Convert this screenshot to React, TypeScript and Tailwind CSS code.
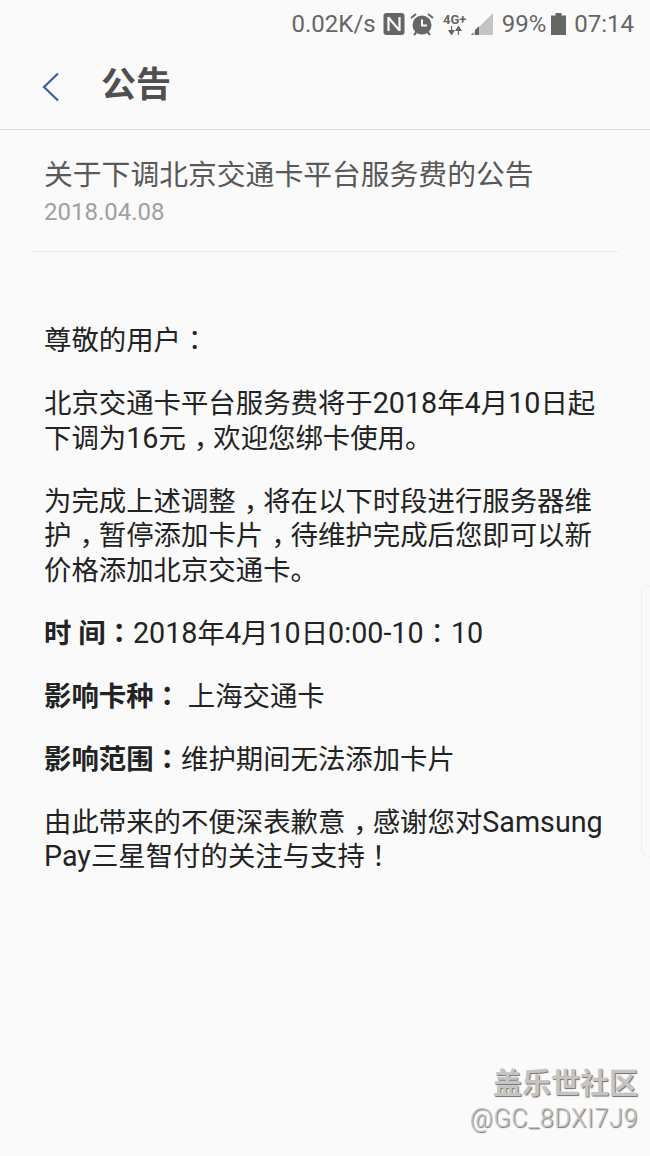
import React from 'react';

const font = '[font-family:Roboto,"Noto_Sans_CJK_SC",sans-serif]';

// centred full-width colon and exclamation mark, the way the phone's font draws them
function P({ children }: { children: React.ReactNode }) {
  return <span className='leading-none [font-family:"Noto_Sans_CJK_TC",sans-serif]'>{children}</span>;
}

// the comma sits low but in the middle of its cell
function Comma() {
  return <span className="inline-block leading-none translate-x-[8px]">，</span>;
}

// latin runs are a little wider than plain Roboto in the picture
function L({ children }: { children: React.ReactNode }) {
  return <span className="text-[28.700px] leading-none">{children}</span>;
}

function StatusBar() {
  return (
    <div className="h-[48px] pr-[16px] flex items-center justify-end text-[#666666] text-[24px] leading-none">
      <span className="mr-[7px]">0.02K/s</span>
      {/* NFC */}
      <svg width="22" height="24" viewBox="0 0 22 24" className="mr-[5px]">
        <rect x="0.5" y="1" width="21" height="22" rx="3" fill="#666666" />
        <path d="M5.500 5v14M16.500 5v14M5.500 5.500l11 13" stroke="#fafafa" strokeWidth="2.200" fill="none" />
      </svg>
      {/* alarm */}
      <svg width="24" height="24" viewBox="0 0 24 24" className="mr-[9px]">
        <circle cx="12" cy="13" r="9.5" fill="#666666" />
        <path d="M12 7.500V13.500H17" stroke="#fafafa" strokeWidth="2" fill="none" />
        <path d="M1 6l5-4M23 6l-5-4M4 23l2.500-3M20 23l-2.500-3" stroke="#666666" strokeWidth="2" fill="none" />
      </svg>
      <div className="flex flex-col items-center mr-[4px] w-[24px] text-[13px] font-bold leading-[13px]">
        <span>4G+</span>
        <svg width="14" height="9" viewBox="0 0 14 9">
          <path d="M3.500 0V6M1 4.500h5L3.500 8.500zM10.500 9V3M8 4.500h5L10.500 0.500z" stroke="#666666" strokeWidth="1.200" fill="#666666" />
        </svg>
      </div>
      <svg width="22" height="24" viewBox="0 0 22 24" className="mr-[9px]">
        <path d="M0 23L22 1V23Z" fill="#c4c4c4" />
        <path d="M0 23H2V21ZM4 23V18L8 14V23Z" fill="#666666" />
      </svg>
      <span className="mr-[5px]">99%</span>
      <svg width="15" height="24" viewBox="0 0 15 24" className="mr-[8px]">
        <path d="M0 3.500H4.500V1H10.500V3.500H15V23H0Z" fill="#666666" />
      </svg>
      <span>07:14</span>
    </div>
  );
}

export default function App() {
  return (
    <div className={`relative w-[650px] h-[1156px] overflow-hidden bg-[#fafafa] ${font}`}>
      <StatusBar />

      {/* Header */}
      <div className="h-[82px] flex items-center border-b border-[#dcdcdc]">
        <svg width="18" height="30" viewBox="0 0 18 30" className="ml-[42px] mt-[-3px]">
          <path d="M16 1.500L2 15L16 28.500" stroke="#3f5ea8" strokeWidth="2.200" fill="none" />
        </svg>
        <h1 className="ml-[41px] mt-[-4px] text-[35px] font-bold text-[#4f4f4f]">公告</h1>
      </div>

      {/* Title block */}
      <div className="mx-[32px] pl-[12px] pt-[27px] pb-[24px] border-b border-[#ebebeb]">
        <h2 className="text-[28.800px] leading-[36px] text-[#595959]">关于下调北京交通卡平台服务费的公告</h2>
        <div className="mt-[4px] text-[24px] leading-[30px] text-[#a0a0a0]">2018.04.08</div>
      </div>

      {/* Body */}
      <div className="pl-[44px] pt-[72px] pr-[40px] text-[27.400px] leading-[34.500px] text-[#232323] flex flex-col gap-[28.500px]">
        <p>尊敬的用户<P>：</P></p>
        <p>北京交通卡平台服务费将于<L>2018</L>年<L>4</L>月<L>10</L>日起下调为<L>16</L>元<Comma />欢迎您绑卡使用。</p>
        <p>为完成上述调整<Comma />将在以下时段进行服务器维护<Comma />暂停添加卡片<Comma />待维护完成后您即可以新价格添加北京交通卡。</p>
        <p><span className="font-bold">时 间<P>：</P></span><L>2018</L>年<L>4</L>月<L>10</L>日<L>0:00-10</L><P>：</P><L>10</L></p>
        <p><span className="font-bold">影响卡种<P>：</P></span>&nbsp;上海交通卡</p>
        <p><span className="font-bold">影响范围<P>：</P></span>维护期间无法添加卡片</p>
        <p>由此带来的不便深表歉意<Comma />感谢您对<L>Samsung Pay</L>三星智付的关注与支持<P>！</P></p>
      </div>

      {/* Edge panel handle */}
      <div className="absolute left-[641px] top-[585px] w-[20px] h-[273px] rounded-l-[10px] border border-[#efefef]" />

      {/* Watermark */}
      <div className="absolute right-[12px] top-[1066px] flex flex-col items-end text-[#c4c4c4] [text-shadow:1px_1px_1px_#6e6e6e]">
        <span className="text-[29px] leading-[36px] font-bold">盖乐世社区</span>
        <span className="mt-[2px] text-[25px] leading-[30px] font-light tracking-[0.7px]">@GC_8DXI7J9</span>
      </div>
    </div>
  );
}
